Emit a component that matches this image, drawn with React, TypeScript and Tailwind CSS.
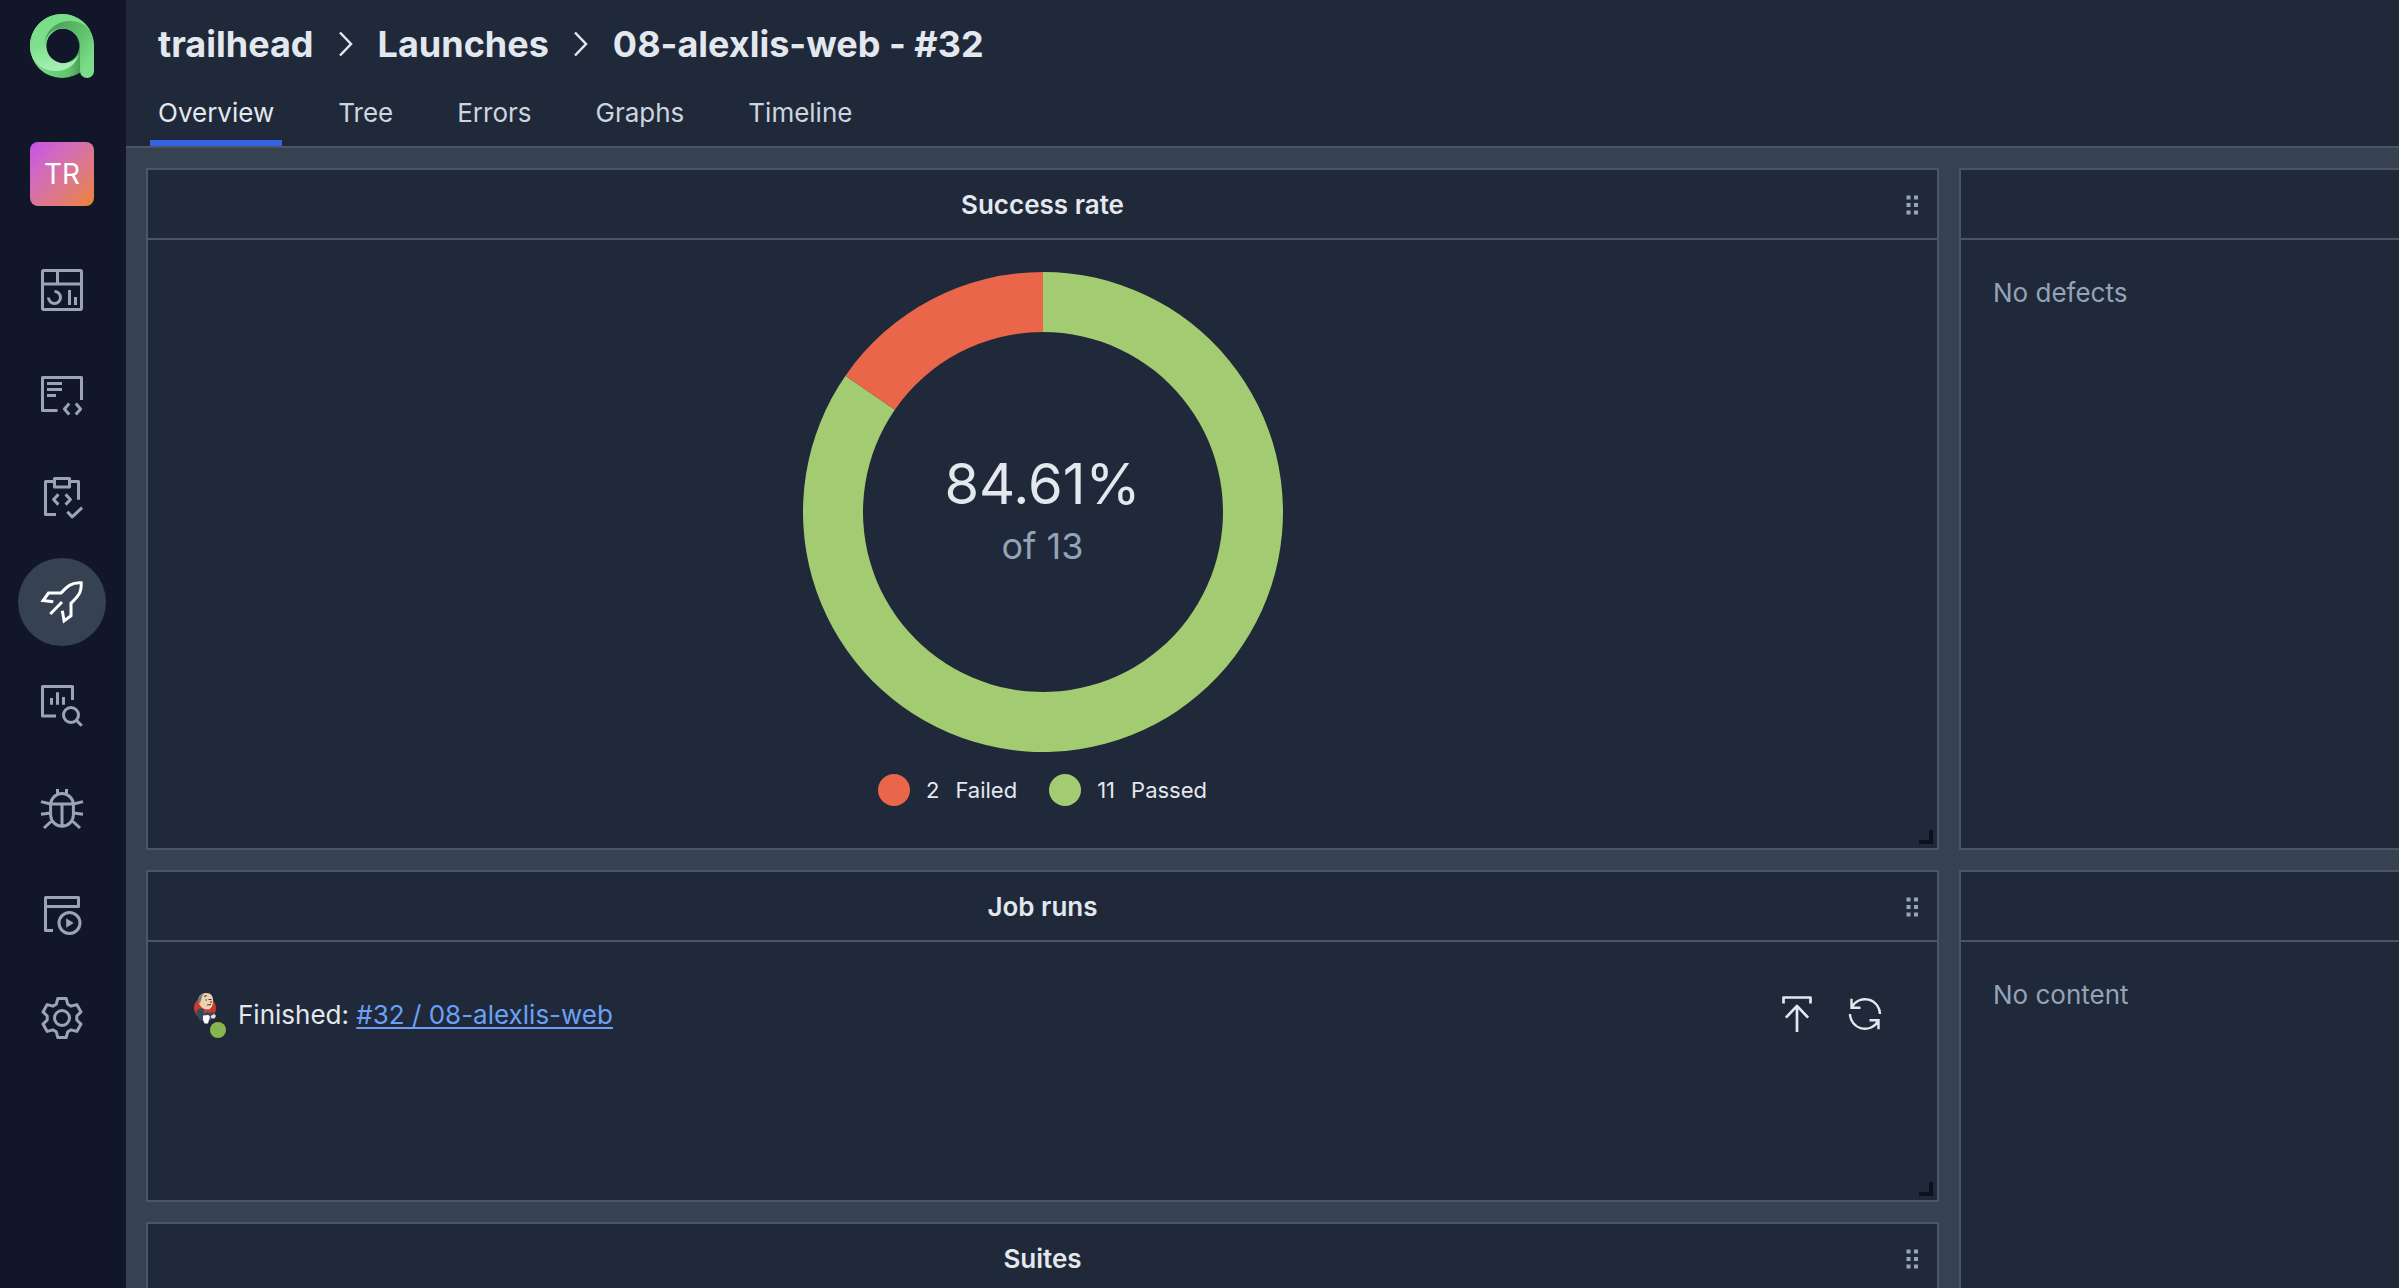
import React from "react";

type IconProps = { children: React.ReactNode };

function NavIcon({ children }: IconProps) {
  return (
    <svg viewBox="0 0 16 16" className="size-12" fill="none" stroke="currentColor" strokeWidth="1" aria-hidden="true">
      {children}
    </svg>
  );
}

const gearPoints = Array.from({ length: 6 }, (_, k) => k * 60)
  .flatMap((deg) =>
    [
      [-1.9, -4.6],
      [-1.4, -6.5],
      [1.4, -6.5],
      [1.9, -4.6],
    ].map(([x, y]) => {
      const a = (deg * Math.PI) / 180;
      return `${(8 + x * Math.cos(a) - y * Math.sin(a)).toFixed(2)},${(8 + x * Math.sin(a) + y * Math.cos(a)).toFixed(2)}`;
    }),
  )
  .join(" ");

const navItems: { label: string; active?: boolean; icon: React.ReactNode }[] = [
  {
    label: "Dashboards",
    icon: (
      <>
        <rect x="1.5" y="1.5" width="13" height="13" rx="0.4" />
        <path d="M1.5 6h13M6.5 1.5V6M5.5 8.5a2 2 0 1 1-2 2M10.5 8v5M12.5 10.3V13" />
      </>
    ),
  },
  {
    label: "Test cases",
    icon: (
      <path
        strokeLinejoin="round"
        d="M14.5 10V2.5h-13v11h5M3 4.5h5M3 6.5h5M3 8.5h3M10.4 11.2 8.8 13l1.6 1.8M12.6 11.2l1.6 1.8-1.6 1.8"
      />
    ),
  },
  {
    label: "Test plans",
    icon: (
      <path
        strokeLinejoin="round"
        d="M5.5 2.5h-3v11H6M10.5 2.5h3v6.1M5.5 1.5h5v2.8h-5zM6.8 6.8 5.2 8.5l1.6 1.7M9.2 6.8l1.6 1.7-1.6 1.7M9.8 12.6l1.6 1.7 3.3-3.1"
      />
    ),
  },
  {
    label: "Launches",
    active: true,
    icon: (
      <path d="M5.1 7.9 1.7 7.5 3.5 5h4.2C9.7 2.9 11 1.4 14.4 1.6 14.6 5 13.1 6.4 11 8.4v4.2L8.7 14.3 8.1 10.9M8 8l-3.9 4" />
    ),
  },
  {
    label: "Analytics",
    icon: (
      <>
        <path strokeLinejoin="round" d="M11.5 6V1.5h-10v9.8H6" />
        <path d="M4.5 5.3v2.3M6.5 3.4v4.2M8.5 5v2.6M12.8 12.8l1.8 1.8" />
        <circle cx="11" cy="11" r="2.5" />
      </>
    ),
  },
  {
    label: "Defects",
    icon: (
      <path d="M4.2 9.6V6.3a3.8 3.8 0 0 1 7.6 0v3.3a3.8 3.8 0 0 1-7.6 0zM4.2 6h7.6M8 6v7.4M6.5 1v1.7M9.5 1v1.7M1 5.2 4.2 6M1 9.4 4.2 9M2 14l2.7-2.5M15 5.2 11.8 6M15 9.4 11.8 9M14 14l-2.7-2.5" />
    ),
  },
  {
    label: "Jobs",
    icon: (
      <>
        <path strokeLinejoin="round" d="M5 13.5H2.5v-11h11v3h-11" />
        <circle cx="10.5" cy="11" r="3.5" />
        <path d="M9.4 9.4 11.9 11l-2.5 1.6z" fill="currentColor" stroke="none" />
      </>
    ),
  },
  {
    label: "Settings",
    icon: (
      <>
        <polygon points={gearPoints} strokeLinejoin="round" />
        <circle cx="8" cy="8" r="2.5" />
      </>
    ),
  },
];

function Logo() {
  return (
    <svg viewBox="0 0 64 64" className="size-16" aria-hidden="true">
      <defs>
        <linearGradient id="ring-bottom" x1="0" x2="1">
          <stop offset="0" stopColor="#7bdf8b" />
          <stop offset="0.6" stopColor="#62c56e" />
          <stop offset="0.78" stopColor="#4c9f57" />
        </linearGradient>
        <linearGradient id="ring-stem" x1="0" y1="0.2" x2="1" y2="0.9">
          <stop offset="0" stopColor="#4a9d55" />
          <stop offset="0.25" stopColor="#57b062" />
          <stop offset="0.55" stopColor="#60c46c" />
          <stop offset="0.85" stopColor="#7bdc8b" />
        </linearGradient>
        <linearGradient id="ring-left" x1="0" y1="0" x2="0.25" y2="1">
          <stop offset="0" stopColor="#76dc87" />
          <stop offset="0.55" stopColor="#7de08d" />
          <stop offset="1" stopColor="#a4f0b1" />
        </linearGradient>
      </defs>
      <path fillRule="evenodd" fill="url(#ring-bottom)" d="M32 0a32 32 0 0 1 0 64 32 32 0 0 1 0-64zm0 14.5a17.4 17.4 0 1 0 0 34.8 17.4 17.4 0 0 0 0-34.8z" />
      <path fill="url(#ring-left)" d="M32 0C14.3 0 0 14.3 0 32c0 6 2 12 5.5 16C10 54 18 57 26 57c11 0 20-6 23.4-17.5A17.4 17.4 0 1 1 32 14.5L60 16C54 6 44 0 32 0z" />
      <path fill="url(#ring-stem)" d="M14.6 32C14.6 17 26 7 40 7c8 0 15 3 20 9.5 2.7 4.5 4 10 4 15.5v25a7 7 0 0 1-14 0V32A17.6 17.6 0 0 0 32 14.5 17.4 17.4 0 0 0 14.6 32z" />
    </svg>
  );
}

function Jenkins() {
  return (
    <svg viewBox="0 0 24 32" className="h-8 w-6" aria-hidden="true">
      <ellipse cx="11" cy="16" rx="11" ry="11" fill="#c9392e" />
      <path d="M2.5 18.500C5 16 8 16 10 17l5 1c3 0 4.500 2 4.500 5l-2.500 5-6 1.500-5-1c-2-3-4-6-3.500-10z" fill="#34495b" />
      <path d="M4.500 7C5 3 8.500 1 12.500 1c4.500 0 7 3.500 6.500 8 0 4.500-1.500 8-5 8.500C9.500 18 6 14.500 5 11z" fill="#ecd0b0" />
      <path d="M4.200 11C3 6 6.500 2 10 1.500 7.500 4 7.500 6 7 8.500L6 11z" fill="#7c7672" />
      <path d="M10 4.500l3-1M14.500 7.500h3M11.500 8h1.500M13 13l4-.5M17 9v2" stroke="#3b3430" strokeWidth="1" fill="none" />
      <path d="M9.500 17.500l4 1 4-1.500v4l-4-1-3.500 1.500z" fill="#dc3b32" />
      <path d="M9 23.500l5.500-.5 1.500 2-2 6.500h-3.500L9 28z" fill="#fff" />
      <path d="M16.500 24l4-2 1.500 2-1.500 2.500h-3z" fill="#e6e0d8" />
    </svg>
  );
}

function Chevron() {
  return (
    <svg viewBox="0 0 16 26" className="h-[26px] w-4" fill="none" stroke="currentColor" strokeWidth="2.5" aria-hidden="true">
      <path d="M2 1.5 13 13 2 24.5" />
    </svg>
  );
}

function DragHandle({ label }: { label: string }) {
  return (
    <button type="button" aria-label={`Move ${label}`} className="mr-[18px] justify-self-end text-[#9aa4b8]">
      <svg viewBox="0 0 13 20" className="h-5 w-[13px]" fill="currentColor" aria-hidden="true">
        {[0.5, 8].map((x) => [0.5, 8, 15.5].map((y) => <rect key={`${x}-${y}`} x={x} y={y} width="4" height="4" />))}
      </svg>
    </button>
  );
}

function Panel({ title, children, className = "" }: { title?: string; children?: React.ReactNode; className?: string }) {
  return (
    <section className={`relative flex flex-col border-2 border-[#4b5565] bg-[#202939] ${className}`}>
      <header className="grid h-[68px] shrink-0 grid-cols-[1fr_auto_1fr] items-center pt-0.5">
        {title && (
          <>
            <h2 className="col-start-2 text-[26px] leading-10 font-semibold">{title}</h2>
            <DragHandle label={title} />
          </>
        )}
      </header>
      <div className="flex-1 border-t-2 border-[#4b5565]">{children}</div>
      {title && (
        <span className="absolute right-1 bottom-1 size-3.5 border-r-4 border-b-4 border-[#0d121a] [clip-path:polygon(0_70%,70%_70%,70%_0,100%_0,100%_100%,0_100%)]" />
      )}
    </section>
  );
}

function Donut({ passed, total }: { passed: number; total: number }) {
  const angle = (passed / total) * 2 * Math.PI;
  const point = (r: number) => `${240 + r * Math.sin(angle)} ${240 - r * Math.cos(angle)}`;
  return (
    <div className="grid size-[480px] place-items-center">
      <svg viewBox="0 0 480 480" className="col-start-1 row-start-1 size-full" role="img" aria-label="Success rate chart">
        <path fill="#a2cb72" d={`M240 0A240 240 0 1 1 ${point(240)}L${point(180)}A180 180 0 1 0 240 60z`} />
        <path fill="#ea664a" d={`M${point(240)}A240 240 0 0 1 240 0V60A180 180 0 0 0 ${point(180)}z`} />
      </svg>
      <div className="col-start-1 row-start-1 text-center">
        <div className="text-[56px] leading-[68px]">84.61%</div>
        <div className="text-[36px] leading-[56px] text-[#94a3b8]">of 13</div>
      </div>
    </div>
  );
}

const legend = [
  { count: 2, label: "Failed", color: "bg-[#ea664a]" },
  { count: 11, label: "Passed", color: "bg-[#a2cb72]" },
];

const tabs = ["Overview", "Tree", "Errors", "Graphs", "Timeline"];

export default function App() {
  return (
    <div className="flex h-screen w-full overflow-hidden bg-[#364152] font-['Inter',sans-serif] text-[26px] text-[#e3e8ef]">
      <aside className="flex w-[126px] shrink-0 flex-col items-center bg-[#111729] pt-3.5 pr-0.5">
        <a href="#home" aria-label="Home">
          <Logo />
        </a>
        <a
          href="#project"
          className="mt-16 grid size-16 place-items-center rounded-lg bg-linear-to-br from-[#c850ec] to-[#ee8220] text-[28px] text-white"
        >
          TR
        </a>
        <nav className="mt-10 flex flex-col gap-4">
          {navItems.map(({ label, active, icon }) => (
            <a
              key={label}
              href={`#${label}`}
              aria-label={label}
              className={`grid size-[88px] place-items-center rounded-full ${active ? "bg-[#364152] text-white" : "text-[#9aa4b8]"}`}
            >
              <NavIcon>{icon}</NavIcon>
            </a>
          ))}
        </nav>
      </aside>

      <div className="flex min-w-0 flex-1 flex-col">
        <header className="flex shrink-0 flex-col border-b-2 border-[#4b5565] bg-[#202939]">
          <h1 className="flex h-[88px] items-center gap-6 pl-8 text-[36px] font-bold">
            <a href="#trailhead">trailhead</a>
            <Chevron />
            <a href="#launches">Launches</a>
            <Chevron />
            <span>08-alexlis-web - #32</span>
          </h1>
          <nav className="flex gap-12 pl-6">
            {tabs.map((tab, i) => (
              <a
                key={tab}
                href={`#${tab}`}
                className={`h-[58px] border-b-[6px] px-2 leading-[50px] ${i === 0 ? "border-[#3662e3]" : "border-transparent text-[#cdd5df]"}`}
              >
                {tab}
              </a>
            ))}
          </nav>
        </header>

        <main className="grid min-h-0 flex-1 grid-cols-[minmax(0,1fr)_440px] grid-rows-[auto_auto_1fr] gap-5 pt-5 pl-5">
          <Panel title="Success rate">
            <div className="flex flex-col items-center pt-8 pb-[42px]">
              <Donut passed={11} total={13} />
              <ul className="mt-[22px] flex gap-8 text-[22px] leading-8">
                {legend.map(({ count, label, color }) => (
                  <li key={label} className="flex gap-4">
                    <span className={`size-8 rounded-full ${color}`} />
                    <span>{count}</span>
                    <span>{label}</span>
                  </li>
                ))}
              </ul>
            </div>
          </Panel>
          <Panel className="border-r-0">
            <p className="p-8 leading-[42px] text-[#94a3b8]">No defects</p>
          </Panel>

          <Panel title="Job runs">
            <div className="flex h-[258px] items-start justify-between pt-12 pr-12 pl-[46px]">
              <div className="flex h-12 items-center">
                <span className="relative mr-5 mb-3">
                  <Jenkins />
                  <span className="absolute -right-2 -bottom-3.5 size-4 rounded-full bg-[#87b54e]" />
                </span>
                <p>
                  Finished:{" "}
                  <a href="#job-32" className="text-[#6ca0f6] underline decoration-2 underline-offset-3">
                    #32 / 08-alexlis-web
                  </a>
                </p>
              </div>
              <div className="flex gap-5">
                <button type="button" aria-label="Upload results" className="grid size-12 place-items-center">
                  <svg viewBox="0 0 16 16" className="size-12" fill="none" stroke="currentColor" strokeWidth="0.9" aria-hidden="true">
                    <path d="M3.5 4.5V2.5h9v2M8 5.2V14M4.3 9.2 8 5.3l3.7 3.9" strokeLinejoin="round" />
                  </svg>
                </button>
                <button type="button" aria-label="Rerun" className="grid size-12 place-items-center">
                  <svg viewBox="0 0 16 16" className="size-12" fill="none" stroke="currentColor" strokeWidth="0.8" aria-hidden="true">
                    <path d="M13 8A5 5 0 0 0 3.6 5.7M3.5 2.9v3h3M3 8a5 5 0 0 0 9.4 2.3M12.5 13.1v-3h-3" />
                  </svg>
                </button>
              </div>
            </div>
          </Panel>
          <Panel className="row-span-2 border-r-0 border-b-0">
            <p className="p-8 leading-[42px] text-[#94a3b8]">No content</p>
          </Panel>

          <Panel title="Suites" className="min-h-[200px]" />
        </main>
      </div>
    </div>
  );
}
